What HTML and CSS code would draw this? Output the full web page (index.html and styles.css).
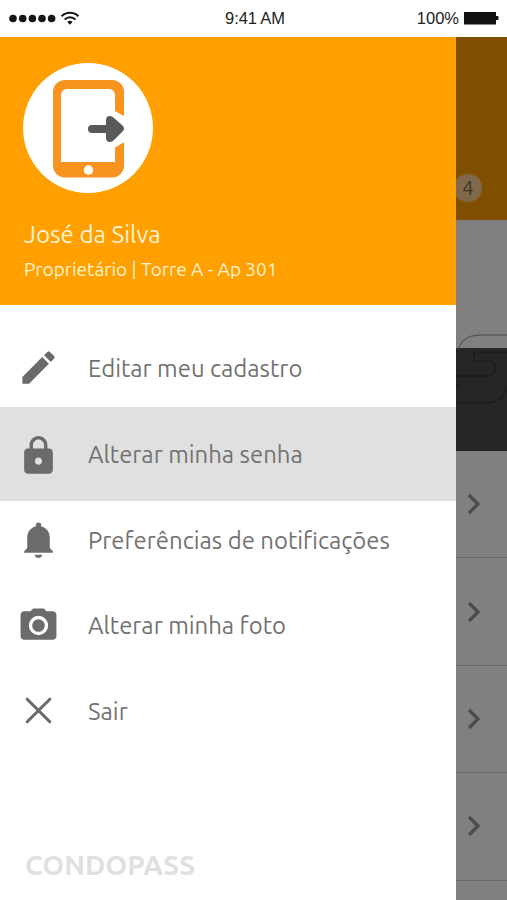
FILE: index.html
```
<!DOCTYPE html>
<html lang="pt-BR">
<head>
    <meta charset="UTF-8">
    <meta name="viewport" content="width=device-width, initial-scale=1.0">
    <title>Condopass</title>
    <link rel="stylesheet" href="styles.css">
</head>
<body>

    <header class="status">
        <div class="signal">
            <svg width="80" height="16" viewBox="0 0 80 16">
                <g fill="#151515">
                    <circle cx="13" cy="7.500" r="3.8"/>
                    <circle cx="22.7" cy="7.500" r="3.8"/>
                    <circle cx="32.4" cy="7.500" r="3.8"/>
                    <circle cx="42" cy="7.500" r="3.8"/>
                    <circle cx="51.6" cy="7.500" r="3.8"/>
                    <path d="M67.3 11a3.4 3.4 0 0 1 5.200 0L69.900 13.700z"/>
                </g>
                <g fill="none" stroke="#151515" stroke-width="2">
                    <path d="M61.6 5.200a12 12 0 0 1 16.8 0M64.6 8.600a7.6 7.6 0 0 1 10.8 0"/>
                </g>
            </svg>
        </div>
        <span class="time">9:41 AM</span>
        <div class="battery">
            <span class="percent">100%</span>
            <svg width="35" height="14" viewBox="0 0 35 14">
                <path fill="#111" d="M0 0h32v4h1.500q1 0 1 1v2q0 1-1 1H32v4.500H0z"/>
            </svg>
        </div>
    </header>

    <main class="screen">
        <nav class="drawer">
            <div class="profile">
                <svg class="avatar" width="130" height="130" viewBox="0 0 130 130">
                    <circle cx="65" cy="65" r="65" fill="#fff"/>
                    <path fill="#f7931e" fill-rule="evenodd" d="M42 17h47a12 12 0 0 1 12 12v73.500a12 12 0 0 1-12 12H42a12 12 0 0 1-12-12V29a12 12 0 0 1 12-12zM44 26a6 6 0 0 0-6 6v67h54V32a6 6 0 0 0-6-6z"/>
                    <circle cx="65.500" cy="107" r="4.700" fill="#fff"/>
                    <path fill="#fff" d="M88 46l15 8v24l-15 9z"/>
                    <path fill="#58595b" d="M69 62h14v-5q0-4 4-4 2 0 4 2l9 8q2 3 0 5l-9 9q-2 2-4 2-4 0-4-4v-5H69q-4 0-4-4t4-4z"/>
                </svg>
                <h1 class="name">José da Silva</h1>
                <p class="unit">Proprietário | Torre A - Ap 301</p>
            </div>

            <ul class="menu">
                <li class="item">
                    <svg class="icon" viewBox="0 0 24 24"><path d="M3 17.250V21h3.750L17.810 9.940l-3.750-3.750L3 17.250zM20.710 7.040a1 1 0 0 0 0-1.410l-2.340-2.340a1 1 0 0 0-1.410 0l-1.830 1.830 3.750 3.750 1.830-1.830z"/></svg>
                    <span class="label">Editar meu cadastro</span>
                </li>
                <li class="item active">
                    <svg class="icon" viewBox="0 -.7 24 24"><path d="M18 8h-1V6c0-2.760-2.240-5-5-5S7 3.240 7 6v2H6c-1.100 0-2 .9-2 2v10c0 1.100.9 2 2 2h12c1.100 0 2-.9 2-2V10c0-1.100-.9-2-2-2zm-6 9c-1.100 0-2-.9-2-2s.9-2 2-2 2 .9 2 2-.9 2-2 2zm3.100-9H8.900V6c0-1.710 1.390-3.100 3.100-3.100s3.100 1.390 3.100 3.100v2z"/></svg>
                    <span class="label">Alterar minha senha</span>
                </li>
                <li class="item">
                    <svg class="icon" viewBox="0 0 24 24"><path d="M12 22.300c1.200 0 2-.8 2.100-1.800H9.900c.1 1 .9 1.800 2.100 1.800zM18.300 16.800v-5.700c0-3.100-1.700-5.600-4.800-6.300V4a1.500 1.500 0 0 0-3 0v.8C7.400 5.500 5.700 8 5.700 11.100v5.700L4 18.500v.9h16v-.9z"/></svg>
                    <span class="label">Preferências de notificações</span>
                </li>
                <li class="item">
                    <svg class="icon" viewBox="0 0 24 24"><circle cx="12" cy="12" r="3.500"/><path d="M9 2.500 7.500 4H4c-1.100 0-2 .9-2 2v12c0 1.100.9 2 2 2h16c1.100 0 2-.9 2-2V6c0-1.100-.9-2-2-2h-3.500L15 2.500H9zm3 14.900a5.400 5.400 0 1 1 0-10.800 5.400 5.400 0 0 1 0 10.800z"/></svg>
                    <span class="label">Alterar minha foto</span>
                </li>
                <li class="item">
                    <svg class="icon" viewBox="0 0 24 24"><path class="cross" d="M5.700 5.700l12.600 12.600M18.300 5.700L5.700 18.300"/></svg>
                    <span class="label">Sair</span>
                </li>
            </ul>

            <p class="brand">CONDOPASS</p>
        </nav>

        <!-- dimmed page behind the menu -->
        <div class="page">
            <div class="page-top"><span class="badge">4</span></div>
            <div class="page-info"></div>
            <div class="page-banner">
                <svg class="outline" width="51" height="72" viewBox="0 0 51 72">
                    <path class="outline-top" d="M0 24Q3 2 23 2H51"/>
                    <path d="M2 16Q0 22 0 24M51 19H18V28H33Q39 28 39 34V37Q39 43 33 43H0M0 52H4M0 70H33Q46 69 51 55"/>
                </svg>
            </div>
            <div class="row"><svg class="chevron" viewBox="0 0 14 22"><path d="M2 2l9 9-9 9"/></svg></div>
            <div class="row"><svg class="chevron" viewBox="0 0 14 22"><path d="M2 2l9 9-9 9"/></svg></div>
            <div class="row"><svg class="chevron" viewBox="0 0 14 22"><path d="M2 2l9 9-9 9"/></svg></div>
            <div class="row"><svg class="chevron" viewBox="0 0 14 22"><path d="M2 2l9 9-9 9"/></svg></div>
        </div>
    </main>

</body>
</html>
```
FILE: styles.css
```
* {
    box-sizing: border-box;
}
body {
    margin: 0;
    height: 900px;
    overflow: hidden;
    background-color: #fff;
    font-family: Ubuntu, 'Noto Sans', sans-serif;
}
.status {
    display: grid;
    grid-template-columns: 1fr auto 1fr;
    align-items: center;
    height: 37px;
    padding: 0 8px 0 0;
    font-family: 'Liberation Sans', Arial, sans-serif;
    font-size: 16.5px;
    color: #222;
}
.signal,
.battery {
    display: flex;
    align-items: center;
}
.battery {
    justify-content: flex-end;
    gap: 5px;
}
.time {
    padding-left: 11px;
    letter-spacing: -0.1px;
}
.screen {
    display: flex;
    height: 863px;
}
.drawer {
    display: flex;
    flex-direction: column;
    width: 456px;
    background-color: #fff;
}
.profile {
    height: 268px;
    padding: 26px 23px 0;
    background-color: #ff9f00;
    color: #fff3d0;
}
.avatar {
    display: block;
}
.name {
    margin: 24px 0 0 1px;
    font-size: 24.2px;
    font-weight: 400;
    line-height: 34px;
    white-space: nowrap;
}
.unit {
    margin: 5px 0 0 1px;
    font-size: 19px;
    line-height: 26px;
    white-space: nowrap;
}
.menu {
    margin: 0;
    padding: 20px 0 0;
    list-style: none;
}
.item {
    display: flex;
    align-items: center;
    gap: 28px;
    height: 85.7px;
    padding-left: 17px;
}
.active {
    height: 94px;
    margin: -3.7px 0 -4.3px;
    background-color: #e0e0e0;
}
.icon {
    width: 43px;
    height: 43px;
    fill: #6b6b6b;
}
.cross {
    fill: none;
    stroke: #6b6b6b;
    stroke-width: 1.7;
    stroke-linecap: round;
}
.label {
    padding-top: 2px;
    font-size: 23.9px;
    line-height: 34px;
    color: #727272;
    white-space: nowrap;
}
.brand {
    margin: auto 0 17px 25px;
    font-size: 27.9px;
    font-weight: 700;
    line-height: 36px;
    color: #e0e0e0;
}
.page {
    width: 51px;
    overflow: hidden;
    background-color: #808080;
}
.page-top {
    position: relative;
    height: 183px;
    background-color: #804f00;
    overflow: hidden;
}
.badge {
    position: absolute;
    top: 137px;
    left: -2px;
    width: 28px;
    height: 28px;
    border-radius: 50%;
    background-color: #80694a;
    color: #3b3630;
    font-size: 20px;
    line-height: 28px;
    text-align: center;
}
.page-info {
    height: 128px;
}
.page-banner {
    position: relative;
    height: 103px;
    background-color: #262626;
}
.outline {
    position: absolute;
    top: -15px;
    left: 0;
    fill: none;
    stroke: #171717;
    stroke-width: 1;
}
.outline-top {
    stroke: #4a4a4a;
}
.row {
    display: flex;
    align-items: center;
    height: 107.4px;
    padding-left: 11px;
    border-bottom: 1px solid #696969;
}
.chevron {
    width: 14px;
    height: 22px;
    fill: none;
    stroke: #4b4b4b;
    stroke-width: 3.2;
}
```
